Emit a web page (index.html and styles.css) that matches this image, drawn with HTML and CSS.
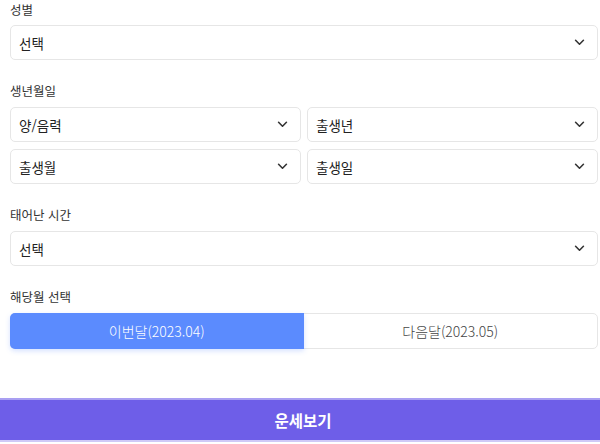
FILE: index.html
```html
<!DOCTYPE html>
<html lang="ko">
<head>
<meta charset="utf-8">
<link rel="stylesheet" href="styles.css">
</head>
<body>
<div class="page">
  <form class="form">
    <div class="field">
      <div class="label">성별</div>
      <div class="select"><span>선택</span><svg class="chev" viewBox="0 0 12 8"><path d="M1.5 1.5 L6 6 L10.5 1.5"/></svg></div>
    </div>
    <div class="field">
      <div class="label">생년월일</div>
      <div class="grid">
        <div class="select"><span>양/음력</span><svg class="chev" viewBox="0 0 12 8"><path d="M1.5 1.5 L6 6 L10.5 1.5"/></svg></div>
        <div class="select"><span>출생년</span><svg class="chev" viewBox="0 0 12 8"><path d="M1.5 1.5 L6 6 L10.5 1.5"/></svg></div>
        <div class="select"><span>출생월</span><svg class="chev" viewBox="0 0 12 8"><path d="M1.5 1.5 L6 6 L10.5 1.5"/></svg></div>
        <div class="select"><span>출생일</span><svg class="chev" viewBox="0 0 12 8"><path d="M1.5 1.5 L6 6 L10.5 1.5"/></svg></div>
      </div>
    </div>
    <div class="field">
      <div class="label">태어난 시간</div>
      <div class="select"><span>선택</span><svg class="chev" viewBox="0 0 12 8"><path d="M1.5 1.5 L6 6 L10.5 1.5"/></svg></div>
    </div>
    <div class="field">
      <div class="label">해당월 선택</div>
      <div class="toggle">
        <div class="opt active">이번달(2023.04)</div>
        <div class="opt">다음달(2023.05)</div>
      </div>
    </div>
  </form>
  <div class="submit">운세보기</div>
</div>
</body>
</html>
```
FILE: styles.css
```css
html, body {
  margin: 0;
  padding: 0;
  background: #fff;
}
body {
  font-family: "Noto Sans CJK KR", "Noto Sans", sans-serif;
  color: #222;
}
.page {
  width: 600px;
  height: 444px;
  display: flex;
  flex-direction: column;
}
.form {
  padding: 0 2px 0 10px;
  display: flex;
  flex-direction: column;
  gap: 21px;
}
.field {
  display: flex;
  flex-direction: column;
}
.label {
  font-size: 12.5px;
  line-height: 20px;
  color: #333;
  margin-bottom: 5px;
}
.field + .field .label {
  margin-bottom: 6px;
}
.grid {
  display: grid;
  grid-template-columns: 1fr 1fr;
  column-gap: 6px;
  row-gap: 7px;
}
.select {
  height: 35px;
  box-sizing: border-box;
  border: 1px solid #e6e6e6;
  border-radius: 5px;
  display: flex;
  align-items: center;
  justify-content: space-between;
  padding: 0 12px 0 8px;
  font-size: 13.5px;
  color: #222;
}
.chev {
  width: 11px;
  height: 7px;
  fill: none;
  stroke: #333;
  stroke-width: 1.8;
  stroke-linecap: round;
  stroke-linejoin: round;
}
.toggle {
  display: flex;
  height: 36px;
  box-sizing: border-box;
  border: 1px solid #e6e6e6;
  border-radius: 5px;
}
.opt {
  flex: 1;
  display: flex;
  align-items: center;
  justify-content: center;
  font-size: 14px;
  font-weight: 300;
  color: #444;
}
.opt.active {
  margin: -1px 0 -1px -1px;
  background: #5b8bfe;
  color: #fff;
  border-radius: 5px 0 0 5px;
  box-shadow: 0 2px 5px rgba(91, 139, 254, 0.25);
}
.submit {
  margin-top: auto;
  margin-bottom: 2px;
  height: 44px;
  box-sizing: border-box;
  background: #6e5ee8;
  border-top: 2px solid #a99ff2;
  border-bottom: 2px solid #cfc9f7;
  color: #fff;
  font-size: 15.5px;
  font-weight: 700;
  display: flex;
  align-items: center;
  justify-content: center;
  padding-left: 6px;
}
```
